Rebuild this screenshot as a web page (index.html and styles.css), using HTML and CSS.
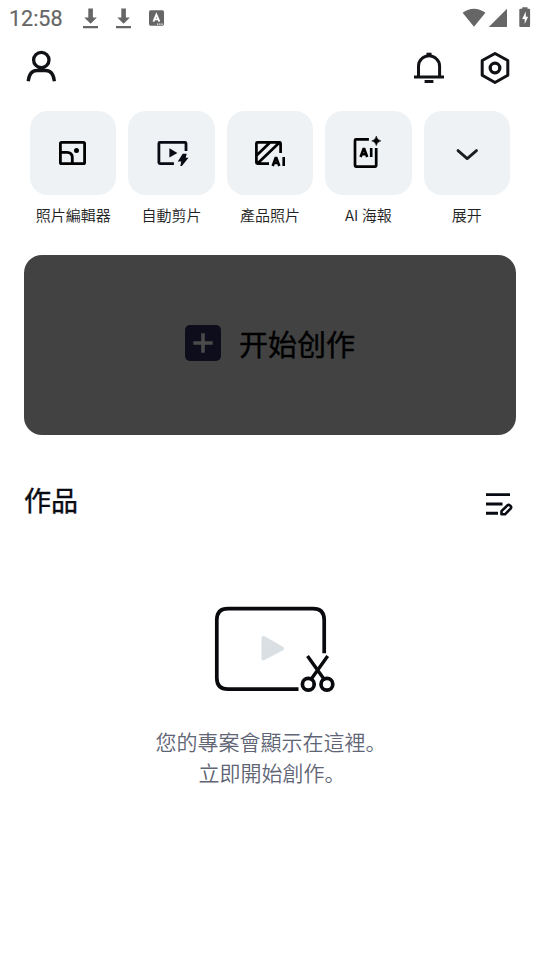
FILE: index.html
```html
<!DOCTYPE html>
<html lang="zh-Hans">
<head>
<meta charset="utf-8">
<title>作品</title>
<link rel="stylesheet" href="styles.css">
</head>
<body>
<div class="statusbar">
  <span class="clock">12:58</span>
  <svg class="status-left" width="86" height="36" viewBox="80 0 86 36">
    <g fill="#666">
      <path id="dl" d="M88.3 8.5h4.6v9h4L90.6 23.8 84.3 17.5h4zM83 26h15v2.3H83z"/>
      <use href="#dl" x="33"/>
      <rect x="149" y="10.3" width="15" height="15.4" rx="1.6"/>
    </g>
    <path d="M153.4 21.600l3-7 3 7M154.5 19.3h3.8" fill="none" stroke="#fff" stroke-width="1.8"/>
    <path d="M157 24.2h1.3m.9 0h1.3m.9 0h1.3" stroke="#fff" stroke-width="1.2"/>
  </svg>
  <svg class="status-right" width="72" height="36" viewBox="460 0 72 36">
    <path d="M462.6 12.8Q474 4.5 485.4 12.8L474 26.8zM507 8.8V27H488.8zM522.3 7.2h5.2v1.6h1.6q1 0 1 1V26q0 1-1 1h-8.800q-1 0-1-1V9.800q0-1 1-1h2z" fill="#666"/>
    <path d="M525.800 11.500l-3.600 7.400h2.500V24l3.400-7.200h-2.300z" fill="#fff"/>
  </svg>
</div>

<header class="header">
  <svg width="34" height="36" viewBox="24 49 34 36" fill="none" stroke="#111216" stroke-width="3.300">
    <circle cx="41.3" cy="60" r="7.700"/>
    <path d="M28.2 81.2C29 74.500 32 70.500 37 70.500H45.500C50.500 70.500 53.600 74.500 54.400 81.200"/>
  </svg>
  <div class="header-actions">
    <svg width="34" height="36" viewBox="412 50 34 36" fill="none" stroke="#111216" stroke-width="3">
      <path d="M418.500 76.500V66.500Q418.500 61.500 421.600 58.800 424.600 55.700 429 55.700T436.400 58.800Q439.600 61.500 439.600 66.500V76.500M414 77h30M424.600 81.500h8.800"/>
      <path d="M426.500 54.200h5"/>
    </svg>
    <svg width="34" height="36" viewBox="478 50 34 36" fill="none" stroke="#111216" stroke-width="3" stroke-linejoin="round">
      <path d="M495 53.500L507.800 60.500V75.300L495 82.500 482.200 75.300V60.500z"/>
      <circle cx="495" cy="68" r="4.800" stroke-width="3.300"/>
    </svg>
  </div>
</header>

<nav class="tools">
  <div class="tool">
    <div class="tile">
      <svg width="40" height="40" viewBox="53 133 40 40" fill="none" stroke="#000" stroke-width="2.800">
        <rect x="60.400" y="142.400" width="24.200" height="21.200" rx="1.200"/>
        <path d="M60.400 152.400h6.600q5.300 0 5.300 5.300v6"/>
        <circle cx="76.500" cy="150.500" r="2.500" fill="#000" stroke="none"/>
      </svg>
    </div>
    <span class="label">照片編輯器</span>
  </div>
  <div class="tool">
    <div class="tile">
      <svg width="40" height="40" viewBox="151.600 133 40 40" fill="none" stroke="#090b14" stroke-width="2.800">
        <path d="M185.600 151V143.400q0-1-1-1H159.500q-1 0-1 1v19.200q0 1 1 1H173.500"/>
        <path d="M169 148.300v9.200l8-4.600z" fill="#090b14" stroke="none"/>
        <path d="M182.300 153.800h4l-1 4h2.800l-6.600 8.200h-1.600l1-4.600h-3.500z" fill="#090b14" stroke="none"/>
      </svg>
    </div>
    <span class="label">自動剪片</span>
  </div>
  <div class="tool">
    <div class="tile">
      <svg width="40" height="40" viewBox="250 133 40 40" fill="none" stroke="#000" stroke-width="2.700">
        <path d="M280.600 153V143.400q0-1-1-1H257.400q-1 0-1 1v19.200q0 1 1 1H269M256.500 155.500L270 142.500M257.500 163.500L279.500 142.500"/>
        <path d="M272.700 166l2.900-8h.8l2.900 8M273.800 163h4.400M283.700 157v9" stroke-width="2.600"/>
      </svg>
    </div>
    <span class="label">產品照片</span>
  </div>
  <div class="tool">
    <div class="tile">
      <svg width="40" height="40" viewBox="348.400 133 40 40" fill="none" stroke="#000" stroke-width="2.700">
        <path d="M369.300 139.400H356.400q-1 0-1 1v25.200q0 1 1 1h19.200q1 0 1-1V148"/>
        <path d="M361 157l2.900-8h.8l2.900 8M362.100 154.300h4.400M371.600 148v9" stroke-width="2.600"/>
        <path d="M376.700 136q.7 4 4.600 4.900-3.900.8-4.600 4.800-.7-4-4.600-4.800 3.900-.9 4.600-4.900z" fill="#000" stroke="#000" stroke-width=".5"/>
      </svg>
    </div>
    <span class="label">AI 海報</span>
  </div>
  <div class="tool">
    <div class="tile">
      <svg width="40" height="40" viewBox="446.800 133 40 40" fill="none" stroke="#1b1c1f" stroke-width="2.800" stroke-linecap="round" stroke-linejoin="round">
        <path d="M457.800 150.600L467 158.600 476.300 150.600"/>
      </svg>
    </div>
    <span class="label">展开</span>
  </div>
</nav>

<button class="create" type="button">
  <svg width="36" height="36" viewBox="0 0 36 36">
    <rect width="36" height="36" rx="5" fill="#0d0d1b"/>
    <path d="M18 8.300v19.400M8.300 18h19.400" stroke="#4a4a4a" stroke-width="3.600"/>
  </svg>
  <span class="create-label">开始创作</span>
</button>

<section class="projects">
  <div class="section-head">
    <h2>作品</h2>
    <svg width="32" height="32" viewBox="484 488 32 32" fill="none" stroke="#090b12" stroke-width="2.900">
      <path d="M486 494.600h24M486 504h16.500M486 513.300h12"/>
      <path d="M501.500 511.200L507.400 505.300q1.300-1 2.500.1l.8.8q1 1.200-.1 2.400L505 514.300H501.500z" stroke-width="2.600" stroke-linejoin="round"/>
    </svg>
  </div>
  <div class="empty">
    <svg width="124" height="90" viewBox="212 604 124 90" fill="none" stroke="#090a0d" stroke-width="3.700">
      <path d="M324.200 653.200V620Q324.200 608.700 313 608.700H228Q216.800 608.700 216.800 620V678Q216.800 689.200 228 689.200H298.500"/>
      <path d="M263.500 636q-2 0-2 2v20.500q0 3 2.600 1.700L283 650.300q2.200-1.700 0-3.500L265 636.400z" fill="#dadfe3" stroke="none"/>
      <path d="M307.500 656L325 680.500M327.700 656L310.200 680.500" stroke-width="3.400"/>
      <circle cx="308.300" cy="684.200" r="5.900"/>
      <circle cx="326.900" cy="684.200" r="5.900"/>
    </svg>
    <p><span class="line">您的專案會顯示在這裡。</span><span class="line line-last">立即開始創作。</span></p>
  </div>
</section>
</body>
</html>
```

FILE: styles.css
```css
* { box-sizing: border-box; }

body {
  margin: 0;
  width: 540px;
  height: 960px;
  overflow: hidden;
  background: #fff;
  color: #090b12;
  font-family: "Noto Sans CJK SC", sans-serif;
}

svg { display: block; flex: none; }

.statusbar {
  display: flex;
  align-items: center;
  height: 36px;
  padding: 0 8px 0 9px;
}

.clock {
  width: 71px;
  color: #666;
  font: 400 21.500px/36px Roboto, sans-serif;
  padding-top: 1px;
  -webkit-text-stroke: 0.2px #666;
}

.status-right { margin-left: auto; }

.header {
  display: flex;
  justify-content: space-between;
  height: 75px;
  padding: 13px 28px 0 24px;
}

.header-actions {
  display: flex;
  gap: 32px;
  padding-top: 1px;
}

.tools {
  display: grid;
  grid-template-columns: repeat(5, 1fr);
  gap: 12px;
  padding: 0 30px;
}

.tool { text-align: center; }

.tile {
  display: flex;
  align-items: center;
  justify-content: center;
  height: 84px;
  border-radius: 18px;
  background: #eef2f5;
}

.label {
  display: block;
  margin-top: 10px;
  color: #222;
  font-size: 15px;
  font-weight: 350;
  line-height: 20px;
  white-space: nowrap;
}

.create {
  display: flex;
  align-items: center;
  justify-content: center;
  gap: 18px;
  width: 492px;
  height: 180px;
  margin: 30px 24px 0;
  padding: 0 0 4px;
  border: 0;
  border-radius: 18px;
  background: #424242;
  color: #000;
  font: 400 29px/40px "Noto Sans CJK SC", sans-serif;
}

.create-label {
  padding-bottom: 1px;
  -webkit-text-stroke: 0.4px #000;
}

.section-head {
  display: flex;
  align-items: center;
  justify-content: space-between;
  height: 40px;
  margin-top: 46px;
  padding: 0 24px;
}

.section-head h2 {
  margin: -2px 0 0;
  font-size: 27px;
  font-weight: 400;
  line-height: 40px;
  -webkit-text-stroke: 0.4px #090b12;
}

.section-head svg { margin-top: 6px; }

.empty {
  display: flex;
  flex-direction: column;
  align-items: center;
  margin-top: 83px;
}

.empty svg { margin-left: 8px; }

.empty p {
  margin: 32px 0 0;
  padding-left: 2px;
  color: #606575;
  font-size: 21px;
  font-weight: 350;
  line-height: 31px;
  text-align: center;
}

.line { display: block; }

.line-last { padding-left: 2px; }
```
